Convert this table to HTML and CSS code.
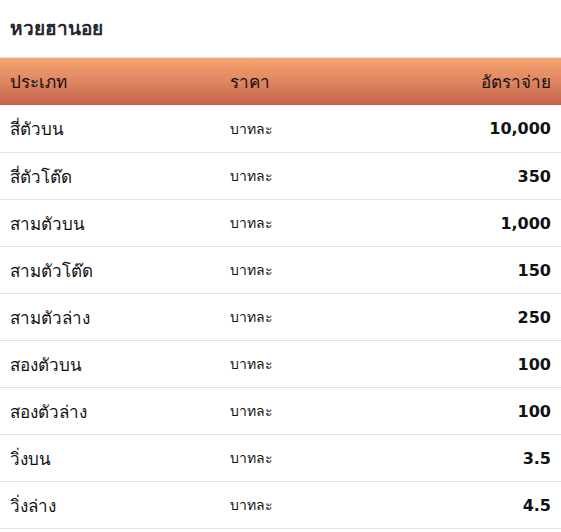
FILE: index.html
```html
<!DOCTYPE html>
<html lang="th">
<head>
<meta charset="utf-8">
<link rel="stylesheet" href="styles.css">
</head>
<body>
<div class="card">
  <h2 class="title">หวยฮานอย</h2>
  <table class="rates">
    <thead>
      <tr><th class="c-type">ประเภท</th><th class="c-price">ราคา</th><th class="c-rate">อัตราจ่าย</th></tr>
    </thead>
    <tbody>
      <tr><td class="c-type">สี่ตัวบน</td><td class="c-price">บาทละ</td><td class="c-rate">10,000</td></tr>
      <tr><td class="c-type">สี่ตัวโต๊ด</td><td class="c-price">บาทละ</td><td class="c-rate">350</td></tr>
      <tr><td class="c-type">สามตัวบน</td><td class="c-price">บาทละ</td><td class="c-rate">1,000</td></tr>
      <tr><td class="c-type">สามตัวโต๊ด</td><td class="c-price">บาทละ</td><td class="c-rate">150</td></tr>
      <tr><td class="c-type">สามตัวล่าง</td><td class="c-price">บาทละ</td><td class="c-rate">250</td></tr>
      <tr><td class="c-type">สองตัวบน</td><td class="c-price">บาทละ</td><td class="c-rate">100</td></tr>
      <tr><td class="c-type">สองตัวล่าง</td><td class="c-price">บาทละ</td><td class="c-rate">100</td></tr>
      <tr><td class="c-type">วิ่งบน</td><td class="c-price">บาทละ</td><td class="c-rate">3.5</td></tr>
      <tr><td class="c-type">วิ่งล่าง</td><td class="c-price">บาทละ</td><td class="c-rate">4.5</td></tr>
    </tbody>
  </table>
</div>
</body>
</html>
```
FILE: styles.css
```css
html, body { margin: 0; padding: 0; background: #fff; }
body { font-family: "Noto Sans", "DejaVu Sans", sans-serif; color: #111; }
.card { width: 561px; }
.title {
  margin: 0;
  padding: 0 10px;
  height: 58px;
  box-sizing: border-box;
  border-bottom: 1px solid #dde4ea;
  font-size: 19px;
  font-weight: 700;
  color: #23272e;
  line-height: 56px;
}
.rates { width: 100%; border-collapse: collapse; border-spacing: 0; }
.rates th {
  height: 47px;
  padding: 0 10px;
  background: linear-gradient(to bottom, #f6a470 0%, #df8661 50%, #c3634a 100%);
  font-size: 17px;
  font-weight: 400;
  color: #111;
  text-align: left;
}
.rates td {
  height: 46px;
  padding: 0 10px;
  font-size: 17px;
  border-bottom: 1px solid #e2e2e2;
}
.rates tbody tr:first-child td { height: 47px; }
.rates th.c-rate, .rates td.c-rate { text-align: right; }
.rates td.c-rate {
  font-family: "DejaVu Sans", "Noto Sans", sans-serif;
  font-size: 16px;
  font-weight: 700;
}
.c-type { width: 200px; }
.rates td.c-price { font-size: 14px; }
```
